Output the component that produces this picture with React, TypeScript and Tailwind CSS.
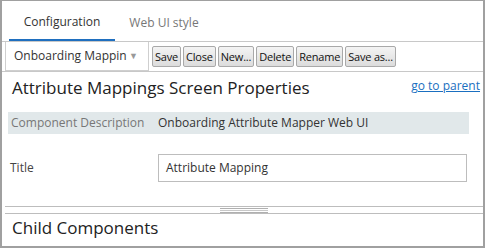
import React from "react"

const font = { fontFamily: '"Segoe UI", "Open Sans", "Noto Sans", sans-serif' }

function ToolButton({ label }: { label: string }) {
  return (
    <button className="h-[21px] rounded-[2px] border border-[#a9a9a9] bg-gradient-to-b from-[#f4f4f4] to-[#dcdcdc] px-[2px] text-[11px] leading-[18px] tracking-[-0.2px] text-[#111]">
      {label}
    </button>
  )
}

export default function App() {
  return (
    <div
      className="box-border h-[248px] w-[485px] overflow-hidden border-x-2 border-b-2 border-t border-[#a0a0a0] bg-white"
      style={font}
    >
      <div className="flex h-[41px] border-b border-[#c8c8c8] pl-[7px]">
        <div className="flex h-full w-[106px] items-center justify-center border-b-2 border-[#1f6fbf] pt-[3px] text-[12px] text-[#333]">
          Configuration
        </div>
        <div className="flex h-full w-[98px] items-center justify-center pt-[3px] text-[12px] text-[#777]">
          Web UI style
        </div>
      </div>

      <div className="flex h-[30px] items-center border-b border-[#c8c8c8] pl-[3px]">
        <div className="mr-[3px] flex h-[29px] w-[144px] items-center justify-between border border-t-0 border-[#cfcfcf] pl-[8px] pr-[10px] text-[12px] text-[#333]">
          <span className="overflow-hidden whitespace-nowrap">Onboarding Mappin</span>
          <span className="text-[9px] text-[#999]">▼</span>
        </div>
        <div className="flex gap-[2px]">
          <ToolButton label="Save" />
          <ToolButton label="Close" />
          <ToolButton label="New..." />
          <ToolButton label="Delete" />
          <ToolButton label="Rename" />
          <ToolButton label="Save as..." />
        </div>
      </div>

      <div className="flex items-start justify-between pl-[10px] pr-[3px] pt-[3px]">
        <h1 className="text-[17px] leading-[26px] text-[#222]">Attribute Mappings Screen Properties</h1>
        <a href="#" className="pt-[2px] text-[12px] leading-[18px] text-[#1a6fc0] underline">
          go to parent
        </a>
      </div>

      <div className="ml-[6px] mr-[14px] mt-[11px] flex h-[22px] items-center bg-[#e1e8ea] text-[12px]">
        <span className="w-[150px] pl-[3px] text-[#777]">Component Description</span>
        <span className="text-[#333]">Onboarding Attribute Mapper Web UI</span>
      </div>

      <div className="ml-[8px] mr-[16px] mt-[20px] flex h-[28px] items-center text-[12px]">
        <span className="w-[148px] text-[#444]">Title</span>
        <div className="flex h-[28px] flex-1 items-center border border-[#bdbdbd] pl-[7px] text-[#333]">
          Attribute Mapping
        </div>
      </div>

      <div className="ml-[3px] mt-[24px] flex h-[8px] justify-center border-y border-[#bdbdbd]">
        <div className="mt-[1px] flex h-[5px] w-[48px] flex-col justify-between">
          <div className="h-px bg-[#b0b0b0]" />
          <div className="h-px bg-[#c8c8c8]" />
          <div className="h-px bg-[#b0b0b0]" />
        </div>
      </div>

      <div className="pl-[10px] pt-[1px] text-[17px] leading-[26px] text-[#222]">Child Components</div>
    </div>
  )
}
